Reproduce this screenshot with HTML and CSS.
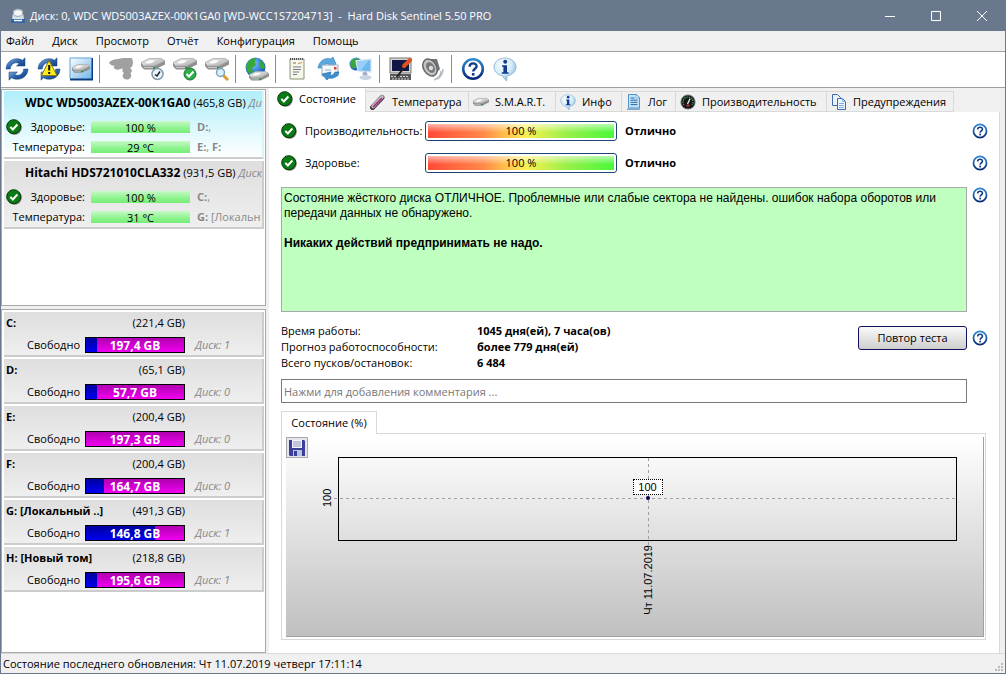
FILE: index.html
```html
<!DOCTYPE html>
<html lang="ru">
<head>
    <meta charset="UTF-8">
    <meta name="viewport" content="width=device-width, initial-scale=1.0">
    <title>Hard Disk Sentinel</title>
    <link rel="stylesheet" href="styles.css">
</head>
<body>
    <svg class="defs" width="0" height="0" aria-hidden="true">
        <defs>
            <linearGradient id="g-blue" x1="0" y1="0" x2="0" y2="1">
                <stop offset="0" stop-color="#2f8ad2"/><stop offset="1" stop-color="#0a2a78"/>
            </linearGradient>
            <linearGradient id="g-arrow" x1="0" y1="0" x2="1" y2="1">
                <stop offset="0" stop-color="#9cc0e6"/><stop offset=".5" stop-color="#2a62ac"/><stop offset="1" stop-color="#0a3474"/>
            </linearGradient>
            <linearGradient id="g-metal" x1="0" y1="0" x2="1" y2="1">
                <stop offset="0" stop-color="#f8f8f8"/><stop offset="1" stop-color="#a4a4a4"/>
            </linearGradient>
            <linearGradient id="g-sky" x1="0" y1="0" x2="1" y2="1">
                <stop offset="0" stop-color="#fff"/><stop offset="1" stop-color="#6db4ea"/>
            </linearGradient>
            <radialGradient id="g-bubble" cx=".4" cy=".3" r=".8">
                <stop offset="0" stop-color="#fff"/><stop offset=".5" stop-color="#d4ecfa"/><stop offset="1" stop-color="#6fa8d2"/>
            </radialGradient>
            <radialGradient id="g-globe" cx=".4" cy=".3" r=".7">
                <stop offset="0" stop-color="#7cc4ff"/><stop offset="1" stop-color="#0c50b8"/>
            </radialGradient>
        </defs>
        <symbol id="i-check" viewBox="0 0 16 16">
            <circle cx="8.600" cy="8.600" r="7.200" fill="#777"/>
            <circle cx="7.700" cy="7.700" r="7" fill="#0a7a14" stroke="#033a06"/>
            <path d="M4.300 7.900l2.500 2.600 4.600-5" fill="none" stroke="#fff" stroke-width="2"/>
        </symbol>
        <symbol id="i-help" viewBox="0 0 24 24">
            <circle cx="12" cy="12" r="9.800" fill="#fff" stroke="url(#g-blue)" stroke-width="2.600"/>
            <path d="M8.600 9.700c0-4.400 7-4.300 7-.4 0 2.400-3.400 2.500-3.400 5.200" fill="none" stroke="#123c8c" stroke-width="2.400"/>
            <rect x="10.900" y="16" width="2.600" height="2.600" fill="#123c8c"/>
        </symbol>
        <symbol id="i-info" viewBox="0 0 24 24">
            <path d="M12 1C5.500 1 1 5 1 10c0 4.500 3.500 7.800 8 8.700L13.500 24l.8-5.200C19.500 18 23 14.500 23 10c0-5-4.500-9-11-9z" fill="url(#g-bubble)" stroke="#88aecb" stroke-width=".8"/>
            <circle cx="12.200" cy="4.800" r="2" fill="#123c8c"/>
            <path d="M9 8.300h5v7h1.600v1.500H8.800v-1.500h1.600v-5.500H9z" fill="#123c8c"/>
        </symbol>
        <symbol id="i-drive" viewBox="0 0 24 12">
            <path d="M0 4.500L8 .5h12l4 2.500v3.500L14 11.500H3L0 8z" fill="#8f8f8f"/>
            <path d="M0 4.500L8 .5h12l4 2.500-10 5H2.500z" fill="url(#g-metal)" stroke="#9c9c9c" stroke-width=".5"/>
            <path d="M4 4.500C6 2 9 1.500 12 1.800s3 2-1 3.400-7 .8-7-.7z" fill="#fafafa" stroke="#bbb" stroke-width=".5"/>
            <path d="M3 9.500h10" stroke="#ccc"/>
            <rect x="12" y="9" width="2.500" height="1.700" fill="#1c9a30"/>
        </symbol>
        <symbol id="i-refresh" viewBox="0 0 24 24">
            <path d="M1 12C1 4 10-1 17.500 3.200L20 .8V9h-8.500l2.800-2.600C9.500 4.300 5.500 7.500 5.300 12z" fill="url(#g-arrow)" stroke="#123c74" stroke-width=".5"/>
            <path d="M23 12c0 8-9 13-16.500 8.800L4 23.200V15h8.500l-2.800 2.600c4.800 2.100 8.800-1.100 9-5.600z" fill="url(#g-arrow)" stroke="#123c74" stroke-width=".5"/>
        </symbol>
        <symbol id="i-temp" viewBox="0 0 16 16">
            <path d="M2.500 13.500L12 3.500" stroke="#3e3440" stroke-width="5" stroke-linecap="round"/>
            <path d="M3 12.500L12 3" stroke="#c8b8c4" stroke-width="3.600" stroke-linecap="round"/>
            <path d="M3.500 12.500L11.500 4.500" stroke="#a8247c" stroke-width="1.600" stroke-linecap="round"/>
        </symbol>
        <symbol id="i-log" viewBox="0 0 16 16">
            <path d="M2.500.5h8l3 3v10.500h-11z" fill="#c5e3f9" stroke="#4f94c8"/>
            <path d="M10 .5V4h3.500z" fill="#fff" stroke="#4f94c8" stroke-width=".6"/>
            <path d="M4.500 4h4M4.500 6.200h7M4.500 8.400h7M4.500 10.600h7" stroke="#2b6aa8"/>
            <path d="M1 15.200h13" stroke="#4484bc"/>
        </symbol>
        <symbol id="i-gauge" viewBox="0 0 16 16">
            <circle cx="8" cy="8" r="7.600" fill="#777"/>
            <circle cx="8" cy="8" r="6.600" fill="#151515"/>
            <path d="M4 11a5 5 0 1 1 8 0" fill="none" stroke="#3aa860" stroke-width="1.200" stroke-dasharray="1.500 .8"/>
            <path d="M7.500 10L10 4.800" stroke="#f4f4f4" stroke-width="1.300"/>
            <path d="M6.500 11.500h3" stroke="#e04040" stroke-width="1.600"/>
        </symbol>
        <symbol id="i-pages" viewBox="0 0 16 16">
            <path d="M1.500.5h5l3 3v8h-8z" fill="#e8f2fb" stroke="#4468b0"/>
            <path d="M6.500 4.500h5l3 3v8h-8z" fill="#eaf5fd" stroke="#4468b0"/>
            <path d="M11.500 4.500v3h3M8 9.500h5M8 11.500h5M8 13.500h5" fill="none" stroke="#7fb2de"/>
        </symbol>
    </svg>

    <header class="titlebar">
        <svg class="app-icon" viewBox="0 0 16 16"><rect x="1" y="10" width="14" height="5" rx="1" fill="#3468a4"/><path d="M2 11L3.500 2.500Q8-1 12.500 2.500L14 11z" fill="#d5e2ea"/><ellipse cx="8" cy="5" rx="4.500" ry="3.300" fill="#f8f8f8" stroke="#9aa"/><path d="M4 12.500h8" stroke="#fff" stroke-width="1.500"/></svg>
        <h1>Диск: 0, WDC WD5003AZEX-00K1GA0 [WD-WCC1S7204713]&nbsp; -&nbsp; Hard Disk Sentinel 5.50 PRO</h1>
        <div class="window-buttons">
            <button aria-label="Свернуть"><svg viewBox="0 0 10 10"><path d="M0 5.500h10"/></svg></button>
            <button aria-label="Развернуть"><svg viewBox="0 0 10 10"><path d="M.5.5h9v9h-9z"/></svg></button>
            <button aria-label="Закрыть"><svg viewBox="0 0 10 10"><path d="M0 0l10 10M10 0L0 10"/></svg></button>
        </div>
    </header>

    <nav class="menu">
        <a href="#">Файл</a>
        <a href="#">Диск</a>
        <a href="#">Просмотр</a>
        <a href="#">Отчёт</a>
        <a href="#">Конфигурация</a>
        <a href="#">Помощь</a>
    </nav>

    <div class="toolbar">
        <button aria-label="Обновить"><svg viewBox="0 0 24 24"><use href="#i-refresh"/></svg></button>
        <button aria-label="Обновить всё"><svg viewBox="0 0 24 24"><use href="#i-refresh"/><path d="M12 3.500L20 18.500H4.500z" fill="#ffec1c" stroke="#8a7a10"/><path d="M12.200 8v5.500M12.200 15v2" stroke="#111" stroke-width="2"/></svg></button>
        <button aria-label="Диск"><svg viewBox="0 0 24 24"><rect x="1" y="1" width="22" height="21" fill="url(#g-sky)"/><path d="M1 22.500h22.500V1" fill="none" stroke="#0c3c80" stroke-width="2"/><path d="M1 22V1h22" fill="none" stroke="#58a4dc"/><use href="#i-drive" x="3" y="7" width="18" height="9"/></svg></button>
        <span class="sep"></span>
        <button aria-label="Проверка" disabled><svg viewBox="0 0 24 24"><path d="M0 5.500Q3 2 9 2l5-1h9l1 4q0 5-3 6c2.500 1.500 2.500 4 .5 5 2 4-.5 6.500-3.500 6.500-4.500 0-5.500-4-3-6.500-2-1-2-3-1-4.500-4 .5-5 2-8 .5-2-1-1-3 0-3.500-3 .500-5-.5-6-3z" fill="#a0a0a0"/></svg></button>
        <button aria-label="Быстрый тест"><svg viewBox="0 0 24 24"><use href="#i-drive" x="0" y="1" width="24" height="12"/><circle cx="16.500" cy="17" r="5.500" fill="#e8f4fb" stroke="#8499a8" stroke-width="1.500"/><path d="M14 17.500l2 1.500 3-4.500" fill="none" stroke="#222" stroke-width="1.500"/></svg></button>
        <button aria-label="Полный тест"><svg viewBox="0 0 24 24"><use href="#i-drive" x="0" y="1" width="24" height="12"/><circle cx="17" cy="17" r="6" fill="#2fae48" stroke="#167030"/><path d="M13.500 17l2.500 2.500 4.500-5" fill="none" stroke="#fff" stroke-width="2"/></svg></button>
        <button aria-label="Тест поверхности"><svg viewBox="0 0 24 24"><use href="#i-drive" x="0" y="1" width="24" height="12"/><path d="M18 18l5 5" stroke="#e09a30" stroke-width="3"/><circle cx="15.500" cy="15.500" r="4" fill="#d8effc" stroke="#7fa4c0" stroke-width="1.500"/></svg></button>
        <span class="sep"></span>
        <button aria-label="Сеть"><svg viewBox="0 0 24 24"><circle cx="10.500" cy="10.500" r="10" fill="url(#g-globe)"/><path d="M3 5c1.500-2.500 5-4.500 8-4l-1 4 1 3-4 3 1 4-3 2C1 14 0 9 3 5zM14 3c3 .5 5.500 4 6 8l-3 1-3-4z" fill="#38a838"/><use href="#i-drive" x="4" y="14" width="20" height="10"/></svg></button>
        <span class="sep"></span>
        <button aria-label="Отчёт"><svg viewBox="0 0 24 24"><path d="M5 2h14v20H5z" fill="#f4f6e8" stroke="#86957c"/><path d="M5 2h14" stroke="#555" stroke-width="2" stroke-dasharray="1 1"/><path d="M8 6h3M8 10h8M8 12.500h8M8 15h6M8 17.500h4" stroke="#778"/><path d="M13 6.500l4-1" stroke="#c84"/></svg></button>
        <button aria-label="Отправить отчёт"><svg viewBox="0 0 24 24"><path d="M1 11C2 4 8 0 14 2l2-2 3 7-8 3 1-3c-3-1-5 1-6 4z" fill="#5ca8de" stroke="#287ab8" stroke-width=".6"/><path d="M5 8h16v11H5z" fill="#f5f8fc" stroke="#98a8b8"/><rect x="17" y="10" width="2.500" height="2.500" fill="#d84020"/><path d="M8 13h6" stroke="#9ab"/><path d="M22 15c-1 5-6 7-10 6l-2 2-5-6 9-2-1 3c2 1 4-1 5-3z" fill="#3c8fd0" stroke="#1c68a8" stroke-width=".6"/></svg></button>
        <button aria-label="Удалённый доступ"><svg viewBox="0 0 24 24"><circle cx="7" cy="7" r="6.500" fill="url(#g-globe)"/><path d="M2 4c2-3 6-3 8-2L8 6l1 3-4 3-4-4z" fill="#38a838"/><path d="M7 4l15-2v13L9 14z" fill="#6cb8f0" stroke="#d8e4ee" stroke-width="1.300"/><path d="M8 5l12-2-8 10H9z" fill="#a9dcff" opacity=".7"/><path d="M15 15l2 4" stroke="#aac" stroke-width="4"/><ellipse cx="16.500" cy="20.500" rx="6" ry="2.500" fill="#c9d4e4"/></svg></button>
        <span class="sep"></span>
        <button aria-label="Настройка"><svg viewBox="0 0 24 24"><rect x="1" y="1" width="21" height="15" fill="#d8d5cc" stroke="#777"/><rect x="3" y="3" width="17" height="11" fill="#101848"/><path d="M1 17h21v6H1z" fill="#55585c"/><path d="M2 19.500h18M3 22h17" stroke="#d8d5cc" stroke-dasharray="2 1"/><path d="M8 20l8-11" stroke="#222" stroke-width="2"/><path d="M15 9l6-6" stroke="#e0501c" stroke-width="4" stroke-linecap="round"/></svg></button>
        <button aria-label="Звук"><svg viewBox="0 0 24 24"><path d="M16 22c4-2 6-6 6-10M13 23c5-2 7-5 7-9" fill="none" stroke="#b4bcc4" stroke-width="1.500"/><path d="M8 2l8 0 3 10-7 8z" fill="#70757a"/><ellipse cx="9" cy="10.500" rx="6.500" ry="9" transform="rotate(-32 9 10.500)" fill="#c2c5c8" stroke="#666" stroke-width="1.500"/><ellipse cx="9.500" cy="10.500" rx="3.800" ry="5.800" transform="rotate(-32 9.500 10.500)" fill="#777"/><circle cx="10" cy="11" r="2.200" fill="#ddd"/></svg></button>
        <span class="sep"></span>
        <button aria-label="Помощь"><svg viewBox="0 0 24 24"><use href="#i-help"/></svg></button>
        <button aria-label="О программе"><svg viewBox="0 0 24 24"><use href="#i-info"/></svg></button>
    </div>

    <div class="content">
        <aside class="sidebar">
            <section class="disks">
                <article class="disk selected">
                    <h2><b>WDC WD5003AZEX-00K1GA0</b> <span>(465,8 GB)</span> <i>Диск: 0</i></h2>
                    <div class="disk-row">
                        <svg class="state"><use href="#i-check"/></svg>
                        <span class="label">Здоровье:</span>
                        <span class="bar">100 %</span>
                        <span class="letters"><b>D:</b>,</span>
                    </div>
                    <div class="disk-row">
                        <span class="label">Температура:</span>
                        <span class="bar">29 °C</span>
                        <span class="letters"><b>E:</b>, <b>F:</b></span>
                    </div>
                </article>
                <article class="disk">
                    <h2><b>Hitachi HDS721010CLA332</b> <span>(931,5 GB)</span> <i>Диск: 1</i></h2>
                    <div class="disk-row">
                        <svg class="state"><use href="#i-check"/></svg>
                        <span class="label">Здоровье:</span>
                        <span class="bar">100 %</span>
                        <span class="letters"><b>C:</b>,</span>
                    </div>
                    <div class="disk-row">
                        <span class="label">Температура:</span>
                        <span class="bar">31 °C</span>
                        <span class="letters"><b>G:</b> [Локальн</span>
                    </div>
                </article>
            </section>

            <section class="volumes">
                <article class="volume">
                    <div class="volume-head"><b>C:</b><span>(221,4 GB)</span></div>
                    <div class="volume-row"><span class="label">Свободно</span><span class="usage"><span class="used" style="width: 11%"></span><b>197,4 GB</b></span><i>Диск: 1</i></div>
                </article>
                <article class="volume">
                    <div class="volume-head"><b>D:</b><span>(65,1 GB)</span></div>
                    <div class="volume-row"><span class="label">Свободно</span><span class="usage"><span class="used" style="width: 11%"></span><b>57,7 GB</b></span><i>Диск: 0</i></div>
                </article>
                <article class="volume">
                    <div class="volume-head"><b>E:</b><span>(200,4 GB)</span></div>
                    <div class="volume-row"><span class="label">Свободно</span><span class="usage"><span class="used" style="width: 0%"></span><b>197,3 GB</b></span><i>Диск: 0</i></div>
                </article>
                <article class="volume">
                    <div class="volume-head"><b>F:</b><span>(200,4 GB)</span></div>
                    <div class="volume-row"><span class="label">Свободно</span><span class="usage"><span class="used" style="width: 18%"></span><b>164,7 GB</b></span><i>Диск: 0</i></div>
                </article>
                <article class="volume">
                    <div class="volume-head"><b>G: [Локальный ..]</b><span>(491,3 GB)</span></div>
                    <div class="volume-row"><span class="label">Свободно</span><span class="usage"><span class="used" style="width: 70%"></span><b>146,8 GB</b></span><i>Диск: 1</i></div>
                </article>
                <article class="volume">
                    <div class="volume-head"><b>H: [Новый том]</b><span>(218,8 GB)</span></div>
                    <div class="volume-row"><span class="label">Свободно</span><span class="usage"><span class="used" style="width: 11%"></span><b>195,6 GB</b></span><i>Диск: 1</i></div>
                </article>
            </section>
        </aside>

        <main class="main">
            <div class="tabs" role="tablist">
                <button class="tab active" role="tab"><svg><use href="#i-check"/></svg>Состояние</button>
                <button class="tab" role="tab"><svg><use href="#i-temp"/></svg>Температура</button>
                <button class="tab" role="tab"><svg><use href="#i-drive"/></svg>S.M.A.R.T.</button>
                <button class="tab" role="tab"><svg><use href="#i-info"/></svg>Инфо</button>
                <button class="tab" role="tab"><svg><use href="#i-log"/></svg>Лог</button>
                <button class="tab" role="tab"><svg><use href="#i-gauge"/></svg>Производительность</button>
                <button class="tab" role="tab"><svg><use href="#i-pages"/></svg>Предупреждения</button>
            </div>

            <div class="page">
                <div class="row rating">
                    <svg class="state"><use href="#i-check"/></svg>
                    <span class="rating-label">Производительность:</span>
                    <span class="meter"><span>100 %</span></span>
                    <b>Отлично</b>
                    <button class="help" aria-label="Справка"><svg><use href="#i-help"/></svg></button>
                </div>
                <div class="row rating">
                    <svg class="state"><use href="#i-check"/></svg>
                    <span class="rating-label">Здоровье:</span>
                    <span class="meter"><span>100 %</span></span>
                    <b>Отлично</b>
                    <button class="help" aria-label="Справка"><svg><use href="#i-help"/></svg></button>
                </div>

                <div class="row summary-row">
                    <div class="summary">
                        <p>Состояние жёсткого диска ОТЛИЧНОЕ. Проблемные или слабые сектора не найдены. ошибок набора оборотов или передачи данных не обнаружено.</p>
                        <p><b>Никаких действий предпринимать не надо.</b></p>
                    </div>
                    <button class="help" aria-label="Справка"><svg><use href="#i-help"/></svg></button>
                </div>

                <div class="row facts-row">
                    <dl class="facts">
                        <dt>Время работы:</dt><dd>1045 дня(ей), 7 часа(ов)</dd>
                        <dt>Прогноз работоспособности:</dt><dd>более 779 дня(ей)</dd>
                        <dt>Всего пусков/остановок:</dt><dd>6 484</dd>
                    </dl>
                    <button class="retest">Повтор теста</button>
                    <button class="help" aria-label="Справка"><svg><use href="#i-help"/></svg></button>
                </div>

                <input class="comment" type="text" aria-label="Комментарий" placeholder="Нажми для добавления комментария ...">

                <div class="chart-tabs"><button class="chart-tab">Состояние (%)</button></div>
                <div class="chart-frame">
                    <div class="chart">
                        <div class="y-axis">
                            <button class="save" aria-label="Сохранить"><svg viewBox="0 0 16 16"><path d="M0 0h15l1 1v15H1l-1-1z" fill="#3a3f9c"/><path d="M3 0h10v8H3z" fill="#f2f4fa"/><path d="M4 2h8M4 4h8M4 6h8" stroke="#8f97c4"/><path d="M4 10h9v6H4z" fill="#b9c4dc"/><path d="M5 11h3v5H5z" fill="#3a3f9c"/></svg></button>
                            <span class="y-label">100</span>
                        </div>
                        <div class="plot-area">
                            <div class="plot">
                                <span class="grid-x"></span>
                                <span class="grid-y"></span>
                                <span class="point"></span>
                                <span class="point-label">100</span>
                            </div>
                            <span class="x-label">Чт 11.07.2019</span>
                        </div>
                    </div>
                </div>
            </div>
        </main>
    </div>

    <footer class="statusbar">
        <span>Состояние последнего обновления: Чт 11.07.2019 четверг 17:11:14</span>
        <svg class="grip" viewBox="0 0 8 8"><path d="M6 0h2v2H6zM3 3h2v2H3zM6 3h2v2H6zM0 6h2v2H0zM3 6h2v2H3zM6 6h2v2H6z" fill="#bbb"/></svg>
    </footer>
</body>
</html>
```
FILE: styles.css
```css
* {
    box-sizing: border-box;
}
body {
    font-family: "Open Sans", "Noto Sans", sans-serif;
    font-size: 11px;
    line-height: 16px;
    margin: 0;
    min-height: 100vh;
    display: flex;
    flex-direction: column;
    background-color: #f0f0f0;
    color: #000;
    border: 1px solid #6a788e;
    border-top: none;
}
button {
    font: inherit;
    color: inherit;
    border: none;
    background: none;
    padding: 0;
}
h1, h2, p, dl, dd {
    margin: 0;
    font-size: inherit;
    font-weight: normal;
}
svg {
    display: block;
    flex-shrink: 0;
}
.defs {
    position: absolute;
}

/* title bar and menu */
.titlebar {
    background-color: #6a788e;
    color: #fff;
    height: 31px;
    display: flex;
    align-items: center;
    padding-left: 9px;
    gap: 4px;
}
.app-icon {
    width: 16px;
    height: 16px;
}
.titlebar h1 {
    flex: 1;
    white-space: nowrap;
}
.window-buttons {
    display: flex;
}
.window-buttons button {
    width: 46px;
    height: 31px;
    display: flex;
    align-items: center;
    justify-content: center;
}
.window-buttons svg {
    width: 10px;
    height: 10px;
    fill: none;
    stroke: #fff;
}
.menu {
    height: 21px;
    display: flex;
    align-items: center;
    gap: 18px;
    padding: 0 5px;
    border-bottom: 1px solid #a0a0a0;
}
.menu a {
    color: #000;
    text-decoration: none;
}
.toolbar {
    height: 36px;
    display: flex;
    align-items: center;
    padding-bottom: 2px;
    background-color: #fff;
    border-bottom: 1px solid #a0a0a0;
}
.toolbar button {
    width: 32px;
    height: 32px;
    display: flex;
    align-items: center;
    justify-content: center;
}
.toolbar svg {
    width: 24px;
    height: 24px;
}
.sep {
    width: 8px;
    height: 28px;
    background: linear-gradient(#8c8c8c, #8c8c8c) 2px 0 / 1px 100% no-repeat;
}

/* disk and volume lists */
.content {
    flex: 1;
    display: grid;
    grid-template-columns: 265px 1fr;
    column-gap: 3px;
}
.sidebar {
    display: flex;
    flex-direction: column;
    gap: 3px;
    min-width: 0;
    padding-top: 1px;
}
.disks, .volumes {
    background-color: #fff;
    border: 1px solid #a8a8a8;
    padding: 1px 1px 0 2px;
}
.disks {
    height: 217px;
}
.volumes {
    flex: 1;
    padding-top: 2px;
}
.disk, .volume {
    border-right: 2px solid #ccc;
    border-bottom: 2px solid #ccc;
    background: linear-gradient(#dedede, #efefef);
    overflow: hidden;
}
.disk {
    height: 68px;
    margin-bottom: 2px;
}
.disk.selected {
    background: linear-gradient(#aeeefa, #fff);
    border-right-color: #d8f4fa;
}
.disk h2 {
    padding-left: 21px;
    margin-bottom: 2px;
    line-height: 24px;
    white-space: nowrap;
    overflow: hidden;
}
.disk h2 b {
    font-size: 12px;
}
.disk i, .volume i {
    color: #888;
}
.disk-row {
    display: flex;
    align-items: center;
    height: 20px;
    white-space: nowrap;
}
.state {
    width: 16px;
    height: 16px;
}
.disk-row .state {
    margin-left: 2px;
    margin-right: -18px;
}
.disk-row .label {
    width: 81px;
    flex-shrink: 0;
    text-align: right;
}
.bar {
    width: 99px;
    height: 12px;
    flex-shrink: 0;
    margin: 0 7px 0 6px;
    line-height: 13px;
    text-align: center;
    background: linear-gradient(#c8f8c8, #8cf48c 60%, #78ec78);
}
.letters {
    color: #888;
}
.volume {
    height: 45px;
    margin-bottom: 2px;
    padding-top: 3px;
}
.volume-head {
    display: flex;
    justify-content: space-between;
    width: 181px;
    padding-left: 2px;
    height: 16px;
}
.volume-row {
    display: flex;
    align-items: center;
    margin-top: 6px;
}
.volume-row .label {
    width: 76px;
    text-align: right;
}
.usage {
    position: relative;
    width: 100px;
    height: 16px;
    margin: 0 10px 0 5px;
    border: 1px solid #000;
    background: linear-gradient(#b000b0, #f000f0);
    color: #fff;
    font-size: 12px;
    text-align: center;
    line-height: 15px;
}
.usage b {
    position: relative;
}
.used {
    position: absolute;
    left: 0;
    top: 0;
    bottom: 0;
    background: linear-gradient(#0000a0, #0000f0);
}

/* tabs */
.main {
    display: flex;
    flex-direction: column;
    min-width: 0;
    padding-right: 5px;
}
.tabs {
    display: grid;
    grid-template-columns: 97px 103px 87px 66px 54px 151px 127px;
    align-items: end;
    height: 24px;
}
.tab {
    display: flex;
    align-items: center;
    gap: 6px;
    height: 21px;
    padding-left: 4px;
    border: 1px solid #d9d9d9;
    border-left: none;
    white-space: nowrap;
}
.tab svg {
    width: 16px;
    height: 16px;
}
.tab.active {
    height: 24px;
    padding: 0 0 3px 8px;
    background-color: #fff;
    border-bottom: none;
    border-top-color: #fff;
}
.page {
    flex: 1;
    display: flex;
    flex-direction: column;
    background-color: #fff;
    border-right: 1px solid #d9d9d9;
    padding: 9px 11px 13px 12px;
}

/* status page */
.row {
    display: flex;
    gap: 5px;
}
.help {
    width: 16px;
    height: 16px;
    flex-shrink: 0;
}
.help svg {
    width: 16px;
    height: 16px;
}
.rating {
    align-items: center;
    height: 20px;
    margin-bottom: 12px;
    gap: 8px;
}
.rating-label {
    width: 112px;
    white-space: nowrap;
}
.rating .help {
    margin-left: auto;
}
.meter {
    width: 192px;
    height: 20px;
    padding: 2px;
    border: 1px solid #1c4474;
    border-radius: 3px;
    background-color: #fff;
}
.meter span {
    display: block;
    height: 14px;
    line-height: 14px;
    text-align: center;
    background: linear-gradient(rgba(255, 255, 255, 0.6), rgba(255, 255, 255, 0) 60%), linear-gradient(to right, #ff4a38, #ff8a48 30%, #fff050 52%, #98f048 75%, #48f83c);
}
.summary-row {
    margin-top: 2px;
}
.summary {
    flex: 1;
    height: 125px;
    padding: 3px 2px;
    border: 1px solid #a8a8a8;
    background-color: #bfffbf;
    font: 12px/15px "Liberation Sans", Arial, sans-serif;
}
.summary p {
    margin-bottom: 15px;
}
.facts-row {
    margin-top: 11px;
}
.facts {
    flex: 1;
    display: grid;
    grid-template-columns: 196px 1fr;
}
.facts dd {
    font-weight: bold;
}
.retest {
    width: 109px;
    height: 24px;
    margin-top: 3px;
    border: 1px solid #10105c;
    border-radius: 3px;
    background: linear-gradient(#fafafa, #cecece);
}
.facts-row .help {
    margin-top: 7px;
}
.comment {
    height: 24px;
    margin: 8px 21px 0 0;
    padding: 0 2px;
    border: 1px solid #7a7a7a;
    font: inherit;
}
.comment::placeholder {
    color: #777;
}

/* chart */
.chart-tabs {
    margin-top: 8px;
    display: flex;
}
.chart-tab {
    height: 23px;
    width: 96px;
    margin-bottom: -1px;
    border: 1px solid #d9d9d9;
    border-bottom: none;
    background-color: #fff;
    position: relative;
    white-space: nowrap;
}
.chart-frame {
    flex: 1;
    display: flex;
    margin-right: 2px;
    padding: 3px 1px 2px 4px;
    border: 1px solid #d9d9d9;
}
.chart {
    flex: 1;
    display: flex;
    padding-right: 26px;
    border-right: 1px solid #a0a0a0;
    border-bottom: 1px solid #a0a0a0;
    background: linear-gradient(#fff, #c0c0c0);
    font: 11px/14px "Liberation Sans", Arial, sans-serif;
}
.y-axis {
    width: 52px;
    display: flex;
    flex-direction: column;
}
.save {
    width: 22px;
    height: 21px;
    border: 1px solid #aaa;
    background-color: #e4e4ec;
    display: flex;
    align-items: center;
    justify-content: center;
}
.save svg {
    width: 16px;
    height: 16px;
}
.y-label, .x-label {
    writing-mode: vertical-rl;
    transform: rotate(180deg);
}
.y-label {
    margin: 30px 0 0 34px;
    width: 14px;
    height: 20px;
    text-align: center;
}
.plot-area {
    flex: 1;
    display: flex;
    flex-direction: column;
    align-items: center;
    padding-top: 20px;
}
.plot {
    position: relative;
    width: 100%;
    height: 84px;
    border: 1px solid #000;
    margin-bottom: 4px;
}
.grid-x, .grid-y {
    position: absolute;
}
.grid-x {
    left: -5px;
    right: 0;
    top: 40px;
    height: 1px;
    background: repeating-linear-gradient(to right, #a0a0a0 0 3px, transparent 3px 6px);
}
.grid-y {
    left: 50%;
    top: 0;
    bottom: -5px;
    width: 1px;
    background: repeating-linear-gradient(to bottom, #a0a0a0 0 3px, transparent 3px 6px);
}
.point, .point-label {
    position: absolute;
    left: 50%;
    transform: translateX(-50%);
}
.point {
    top: 38px;
    width: 4px;
    height: 4px;
    border-radius: 50%;
    background-color: #000050;
}
.point-label {
    top: 21px;
    width: 30px;
    height: 16px;
    border: 1px dotted #000;
    background-color: #fff;
    text-align: center;
}

.statusbar {
    height: 20px;
    display: flex;
    justify-content: space-between;
    align-items: center;
    padding: 0 2px;
    border-top: 1px solid #d9d9d9;
}
.grip {
    width: 8px;
    height: 8px;
    align-self: flex-end;
    margin-bottom: 2px;
}
```
